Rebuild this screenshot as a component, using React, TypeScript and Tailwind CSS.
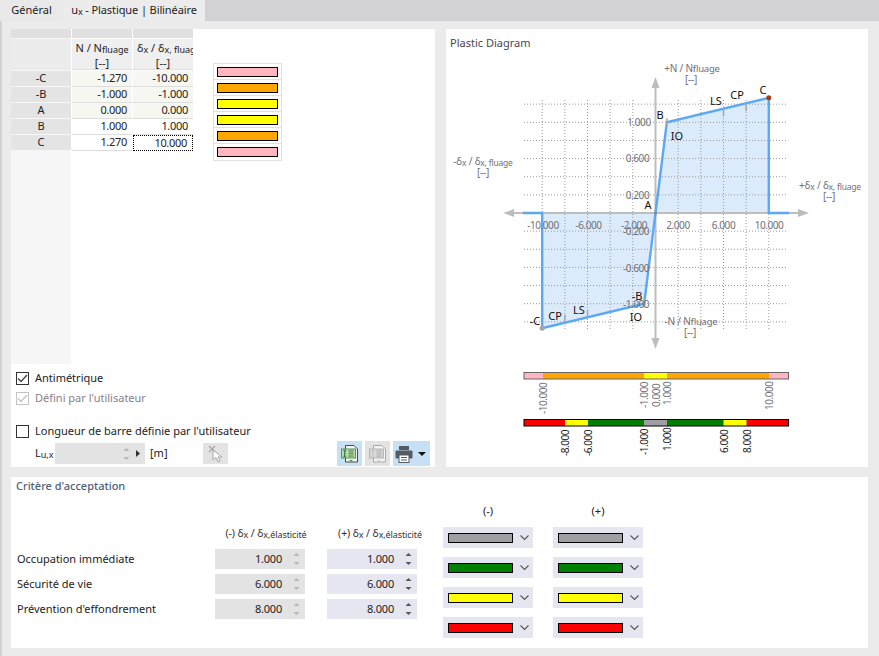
import React from "react";

const font = '"Noto Sans", "Open Sans", sans-serif';

function Sub({ children }: { children: React.ReactNode }) {
  return <span className="text-[9px] relative top-[1px]">{children}</span>;
}

function Check({ checked, disabled }: { checked?: boolean; disabled?: boolean }) {
  return (
    <span className={`w-[13px] h-[13px] border flex items-center justify-center shrink-0 ${disabled ? "border-[#c4c4c4]" : "border-[#333333]"}`}>
      {checked && (
        <svg width="11" height="11" viewBox="0 0 11 11">
          <path d="M1 5.5 L4 8.5 L10 2" fill="none" stroke={disabled ? "#c4c4c4" : "#444444"} strokeWidth="1.4" />
        </svg>
      )}
    </span>
  );
}

function Spin({ color }: { color: string }) {
  return (
    <svg width="7" height="14" viewBox="0 0 7 14">
      <path d="M3.5 1 L6.5 4 H0.5 Z" fill={color} />
      <path d="M3.5 13 L6.5 10 H0.5 Z" fill={color} />
    </svg>
  );
}

function SheetIcon({ dim }: { dim?: boolean }) {
  const a = dim ? "#b5b5b5" : "#5d8f55";
  const b = dim ? "#c9c9c9" : "#2f8a3a";
  const k = dim ? "#a8a8a8" : "#4a4a4a";
  return (
    <svg width="18" height="18" viewBox="0 0 18 18">
      <path d="M4.5 0.5 H13 L16.5 4 V17 H4.5 Z" fill="#f4f4f4" stroke={k} />
      <rect x="0.5" y="4" width="14" height="9" fill={dim ? "#d8d8d8" : "#b9d9ae"} stroke={a} />
      <path d="M2.5 5.5 H5 M3.7 5.5 V11.5 M2.5 11.5 H5" stroke={b} strokeWidth="1.4" fill="none" />
      <path d="M7 6 H13 M7 8.5 H13 M7 11 H13 M9 5 V12 M11 5 V12" stroke={a} strokeWidth="0.8" />
      <path d="M8 15 H12 L10 16.5 Z" fill={b} />
    </svg>
  );
}

function Printer() {
  return (
    <svg width="18" height="18" viewBox="0 0 18 18">
      <rect x="4" y="1" width="10" height="4" fill="#555b63" />
      <rect x="0.5" y="5.5" width="17" height="8" rx="1" fill="#555b63" />
      <rect x="4" y="10" width="10" height="7.5" fill="#ffffff" stroke="#555b63" />
      <path d="M6 12.5 H12 M6 15 H12" stroke="#555b63" />
    </svg>
  );
}

function Swatch({ c, w = "w-[61px]" }: { c: string; w?: string }) {
  return <div className={`${w} h-[10px] border border-black`} style={{ backgroundColor: c }} />;
}

function Spinner({ v, on }: { v: string; on?: boolean }) {
  return (
    <div className={`w-[90px] h-[20px] flex items-center justify-end pr-[5px] gap-[11px] tracking-[-0.2px] text-[#222] ${on ? "bg-[#e6e6f0]" : "bg-[#e3e3e3]"}`}>
      <span>{v}</span>
      <Spin color={on ? "#555555" : "#b8b8b8"} />
    </div>
  );
}

function Drop({ c }: { c: string }) {
  return (
    <div className="w-[90px] h-[21px] bg-[#e6e6f0] flex items-center pl-[5px] gap-[7px]">
      <Swatch c={c} w="w-[65px]" />
      <svg width="9" height="6" viewBox="0 0 9 6">
        <path d="M0.5 0.5 L4.5 4.5 L8.5 0.5" fill="none" stroke="#555555" strokeWidth="1.1" />
      </svg>
    </div>
  );
}

const X0 = 655.5, Y0 = 213, SX = 11.33, SY = 90.7;
const px = (v: number) => X0 + v * SX;
const py = (v: number) => Y0 - v * SY;

function Diagram() {
  const gridX = [-10, -8, -6, -4, -2, 2, 4, 6, 8, 10];
  const gridY = [-1.2, -1, -0.8, -0.6, -0.4, -0.2, 0.2, 0.4, 0.6, 0.8, 1, 1.2];
  const pts = `${px(-10)},${py(0)} ${px(-10)},${py(-1.27)} ${px(-1)},${py(-1)} ${px(0)},${py(0)} ${px(1)},${py(1)} ${px(10)},${py(1.27)} ${px(10)},${py(0)}`;
  const grey = { fontSize: 10, fill: "#6f6f78", letterSpacing: "-0.45px" };
  const lbl = { fontSize: 10, fill: "#6f6f78", letterSpacing: "-0.2px" };
  const blk = { fontSize: 11, fill: "#111" };
  const T = (x: number, y: number, s: React.ReactNode, st: any = grey, anchor: string = "middle") => (
    <text x={x} y={y} textAnchor={anchor as any} style={st}>{s}</text>
  );
  const V = (x: number, yEnd: number, s: string, fill = "#6f6f78") => (
    <text transform={`translate(${x + 4} ${yEnd}) rotate(-90)`} style={{ fontSize: 10, fill, letterSpacing: "-0.45px" }}>{s}</text>
  );
  const tick = (v: number, n: number) => (
    <line x1={px(v)} x2={px(v)} y1={py(n) - 4} y2={py(n) + 4} stroke="#a5a5a5" strokeWidth="1.5" />
  );
  return (
    <svg width="433" height="438" viewBox="446 29 433 438" className="block" style={{ fontFamily: font }}>
      <polygon points={pts} fill="#dcebfb" />
      <g stroke="#999999" strokeWidth="1" strokeDasharray="1 2">
        {gridX.map((v) => <line key={v} x1={px(v)} x2={px(v)} y1={100} y2={329} />)}
        {gridY.map((v) => <line key={v} x1={524} x2={786} y1={py(v)} y2={py(v)} />)}
      </g>
      <g stroke="#bdbdbd" strokeWidth="2" fill="#bdbdbd">
        <line x1={510} x2={802} y1={Y0} y2={Y0} />
        <line x1={X0} x2={X0} y1={84} y2={342} />
        <path d="M503 213 L514 209 V217 Z" strokeWidth="0" />
        <path d="M809 213 L798 209 V217 Z" strokeWidth="0" />
        <path d="M655.5 77 L651.5 88 H659.5 Z" strokeWidth="0" />
        <path d="M655.5 349 L651.5 338 H659.5 Z" strokeWidth="0" />
      </g>
      <polyline points={`523,213 ${pts} 789,213`} fill="none" stroke="#5ba9f4" strokeWidth="2.4" />
      {tick(1, 1)}{tick(6, 1.11)}{tick(8, 1.165)}
      {tick(-1, -1)}{tick(-6, -1.11)}{tick(-8, -1.165)}
      <circle cx={px(10)} cy={py(1.27)} r="2.5" fill="#a83c10" />
      <circle cx={px(-10)} cy={py(-1.27)} r="2.5" fill="#a5a5a5" />
      <circle cx={X0} cy={Y0} r="1.5" fill="#888" />

      {T(543, 229, "-10.000")}{T(588.5, 229, "-6.000")}{T(634, 229, "-2.000")}
      {T(678, 229, "2.000")}{T(723.5, 229, "6.000")}{T(769, 229, "10.000")}
      {T(639, 126, "1.000")}{T(637.5, 162, "0.600")}{T(637.5, 199, "0.200")}
      {T(636, 235, "-0.200")}{T(636, 272, "-0.600")}{T(636, 308, "-1.000")}

      {T(692, 72, <>+N / N<tspan fontSize="9.5">fluage</tspan></>, lbl)}
      {T(691, 83, "[--]", lbl)}
      {T(483, 165, <>-δ<tspan fontSize="8.5" dy="1">x</tspan><tspan dy="-1"> / δ</tspan><tspan fontSize="8.5" dy="1">x, fluage</tspan></>, lbl)}
      {T(483, 176, "[--]", lbl)}
      {T(830, 189, <>+δ<tspan fontSize="8.5" dy="1">x</tspan><tspan dy="-1"> / δ</tspan><tspan fontSize="8.5" dy="1">x, fluage</tspan></>, lbl)}
      {T(829, 200, "[--]", lbl)}
      {T(691, 325, <>-N / N<tspan fontSize="9.5">fluage</tspan></>, lbl)}
      {T(690, 336, "[--]", lbl)}

      {T(648, 209, "A", blk)}{T(660, 119, "B", blk)}{T(677, 140, "IO", blk)}
      {T(716, 105, "LS", blk)}{T(737, 99, "CP", blk)}{T(763, 94, "C", blk)}
      {T(637, 300, "-B", blk)}{T(636, 321, "IO", blk)}{T(579, 314, "LS", blk)}
      {T(555, 320, "CP", blk)}{T(535, 325, "-C", blk)}

      <g>
        <rect x="524" y="372.5" width="264.5" height="6.5" fill="#ffa500" />
        <rect x="524" y="372.5" width="19" height="6.5" fill="#ffb6c1" />
        <rect x="769" y="372.5" width="19.5" height="6.5" fill="#ffb6c1" />
        <rect x="644" y="372.5" width="23" height="6.5" fill="#ffff00" />
        <rect x="524" y="372.5" width="264.5" height="6.5" fill="none" stroke="#6b6468" />
      </g>
      {V(542.5, 414, "-10.000")}{V(644, 408, "-1.000")}{V(655.5, 407, "0.000")}
      {V(667, 405, "1.000")}{V(769, 410, "10.000")}
      <g>
        <rect x="524" y="419.5" width="264.5" height="6.5" fill="#ff0000" />
        <rect x="565" y="419.5" width="23" height="6.5" fill="#ffff00" />
        <rect x="588" y="419.5" width="56" height="6.5" fill="#008000" />
        <rect x="644" y="419.5" width="23" height="6.5" fill="#a09fa3" />
        <rect x="667" y="419.5" width="56.5" height="6.5" fill="#008000" />
        <rect x="723.5" y="419.5" width="23" height="6.5" fill="#ffff00" />
        <rect x="524" y="419.5" width="264.5" height="6.5" fill="none" stroke="#000" />
      </g>
      {V(565, 456, "-8.000", "#222")}{V(588, 456, "-6.000", "#222")}{V(644, 455, "-1.000", "#222")}
      {V(667, 451, "1.000", "#222")}{V(723.5, 453, "6.000", "#222")}{V(746.5, 453, "8.000", "#222")}
    </svg>
  );
}

const rows = [
  ["-C", "-1.270", "-10.000"],
  ["-B", "-1.000", "-1.000"],
  ["A", "0.000", "0.000"],
  ["B", "1.000", "1.000"],
  ["C", "1.270", "10.000"],
];

export default function App() {
  return (
    <div className="w-[879px] h-[656px] bg-[#ebebeb] overflow-hidden flex flex-col text-[11px] text-[#222]" style={{ fontFamily: font }}>
      <div className="h-[21px] bg-[#d2d2d6] flex shrink-0">
        <div className="w-[63px] bg-[#e9e9e9] flex items-center justify-center">Général</div>
        <div className="w-[142px] bg-[#ececec] flex items-center justify-center">
          <span className="tracking-[-0.1px]">u<Sub>x</Sub> - Plastique | Bilinéaire</span>
        </div>
      </div>
      <div className="flex-1 flex flex-col border-l-2 border-[#d2d2d6] pl-[9px] pr-[11px]">
        <div className="flex gap-[11px] mt-[8px] h-[438px]">
          {/* left */}
          <div className="w-[424px] bg-white flex flex-col">
            <div className="flex h-[335px]">
              <div className="w-[60px] h-full bg-[#f6f6f6] flex flex-col gap-[1px]">
                <div className="h-[9px] bg-[#e0e0e0]" />
                <div className="h-[31px] bg-[#ececec]" />
                {rows.map((r) => (
                  <div key={r[0]} className="h-[15px] bg-[#e4e4e4] flex items-center justify-center">{r[0]}</div>
                ))}
              </div>
              <div className="grid grid-cols-[60px_60px] auto-rows-min gap-x-[1px] ml-[1px] h-fit">
                <div className="h-[9px] bg-[#e0e0e0] mb-[1px]" />
                <div className="h-[9px] bg-[#e0e0e0] mb-[1px]" />
                <div className="h-[31px] bg-[#efefef] text-center leading-[14px] pt-[2px] whitespace-nowrap overflow-hidden mb-[1px] border-b border-[#dddddd]">
                  <div>N / N<Sub>fluage</Sub></div>
                  <div>[--]</div>
                </div>
                <div className="h-[31px] bg-[#efefef] pl-[4px] leading-[14px] pt-[2px] whitespace-nowrap overflow-hidden mb-[1px] border-b border-[#dddddd]">
                  <div>δ<Sub>x</Sub> / δ<Sub>x, fluage</Sub></div>
                  <div className="text-center pr-[4px]">[--]</div>
                </div>
                {rows.map((r, i) => (
                  <React.Fragment key={r[0]}>
                    <div className={`h-[16px] flex items-center justify-end pr-[5px] tracking-[-0.3px] border-b border-[#dddddd] ${i < 3 ? "bg-[#f6f7f0]" : "bg-white"}`}>{r[1]}</div>
                    <div className={`h-[16px] flex items-center justify-end pr-[5px] tracking-[-0.3px] border-b border-[#dddddd] ${i < 3 ? "bg-[#f6f7f0]" : "bg-white"} ${i === 4 ? "border border-dotted border-black" : ""}`}>{r[2]}</div>
                  </React.Fragment>
                ))}
              </div>
              <div className="ml-[20px] mt-[34px] w-[69px] h-fit border border-[#e0e0e0]">
                {["#ffb6c1", "#ffa500", "#ffff00", "#ffff00", "#ffa500", "#ffb6c1"].map((c, i) => (
                  <div key={i} className={`h-[16px] flex items-center justify-center ${i < 5 ? "border-b border-[#e0e0e0]" : ""}`}>
                    <Swatch c={c} />
                  </div>
                ))}
              </div>
            </div>
            <div className="pl-[5px] pt-[7px] flex flex-col">
              <label className="flex items-center gap-[6px] h-[14px]"><Check checked /><span>Antimétrique</span></label>
              <label className="flex items-center gap-[6px] h-[14px] mt-[6px] text-[#8a8088]"><Check checked disabled /><span>Défini par l'utilisateur</span></label>
              <label className="flex items-center gap-[6px] h-[14px] mt-[19px]"><Check /><span>Longueur de barre définie par l'utilisateur</span></label>
            </div>
            <div className="flex items-center pl-[24px] pr-[5px] mt-[3px]">
              <span className="w-[20px]">L<Sub>u,x</Sub></span>
              <div className="w-[90px] h-[21px] bg-[#e3e3e3] flex items-center justify-end pr-[5px] gap-[6px]">
                <Spin color="#b8b8b8" />
                <svg width="4" height="7" viewBox="0 0 4 7"><path d="M0 0 L4 3.5 L0 7 Z" fill="#333" /></svg>
              </div>
              <span className="ml-[5px] w-[53px]">[m]</span>
              <div className="w-[25px] h-[21px] bg-[#e3e3e3] flex items-center justify-center">
                <svg width="16" height="18" viewBox="0 0 16 18">
                  <path d="M1 1 L7 7 M7 1 L1 7" stroke="#a5a5a5" strokeWidth="1.2" />
                  <path d="M5 5 L5 15 L8 12.5 L10 17 L12 16 L10 12 L14 12 Z" fill="#ffffff" stroke="#a5a5a5" />
                </svg>
              </div>
              <div className="flex-1" />
              <div className="flex gap-[3px]">
                <div className="w-[25px] h-[25px] bg-[#c6e0f5] flex items-center justify-center"><SheetIcon /></div>
                <div className="w-[25px] h-[25px] bg-[#e3e3e3] flex items-center justify-center"><SheetIcon dim /></div>
                <div className="w-[37px] h-[25px] bg-[#c6e0f5] flex items-center pl-[2px] gap-[5px]">
                  <Printer />
                  <svg width="8" height="4" viewBox="0 0 8 4"><path d="M0 0 H8 L4 4 Z" fill="#111" /></svg>
                </div>
              </div>
            </div>
          </div>
          {/* right */}
          <div className="relative w-[422px] bg-white overflow-hidden">
            <span className="absolute left-[4px] top-[6px] text-[#4b4650]">Plastic Diagram</span>
            <Diagram />
          </div>
        </div>
        {/* bottom */}
        <div className="mt-[10px] h-[171px] w-[857px] bg-white relative flex pl-[6px]">
          <span className="absolute left-[5px] top-[1px] text-[#50607c] font-medium">Critère d'acceptation</span>
          <div className="w-[198px] flex flex-col gap-[5px] pt-[72px]">
            <div className="h-[20px] flex items-center">Occupation immédiate</div>
            <div className="h-[20px] flex items-center">Sécurité de vie</div>
            <div className="h-[20px] flex items-center">Prévention d'effondrement</div>
          </div>
          <div className="w-[112px] flex flex-col gap-[5px] pt-[49px]">
            <div className="ml-[6px] w-[90px] h-[18px] flex justify-center whitespace-nowrap text-[10.5px] tracking-[-0.1px] text-[#333]"><span>(-) δ<Sub>x</Sub> / δ<Sub>x,élasticité</Sub></span></div>
            <Spinner v="1.000" /><Spinner v="6.000" /><Spinner v="8.000" />
          </div>
          <div className="w-[116px] flex flex-col gap-[5px] pt-[49px]">
            <div className="ml-[8px] w-[90px] h-[18px] flex justify-center whitespace-nowrap text-[10.5px] tracking-[-0.1px] text-[#333]"><span>(+) δ<Sub>x</Sub> / δ<Sub>x,élasticité</Sub></span></div>
            <Spinner v="1.000" on /><Spinner v="6.000" on /><Spinner v="8.000" on />
          </div>
          {["(-)", "(+)"].map((h) => (
            <div key={h} className="w-[110px] flex flex-col gap-[9px] pt-[27px]">
              <div className="w-[90px] h-[14px] text-center leading-[14px]">{h}</div>
              <Drop c="#a09fa3" /><Drop c="#008000" /><Drop c="#ffff00" /><Drop c="#ff0000" />
            </div>
          ))}
        </div>
      </div>
    </div>
  );
}
